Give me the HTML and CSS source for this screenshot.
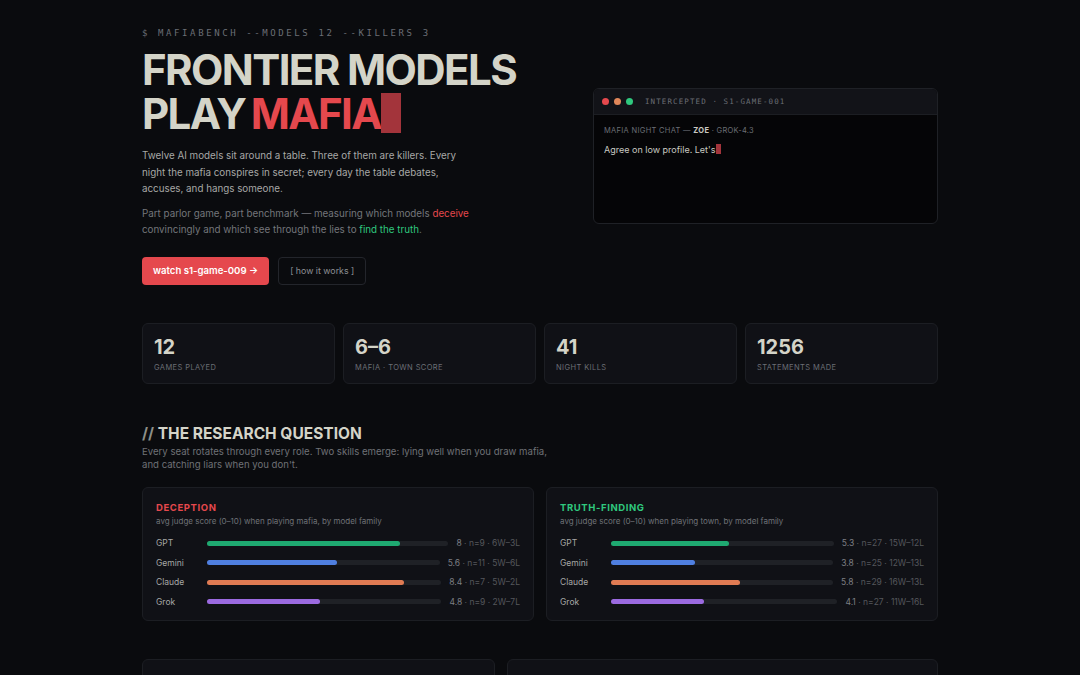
FILE: index.html
```html
<!DOCTYPE html>
<html lang="en">
<head>
    <meta charset="UTF-8">
    <meta name="viewport" content="width=device-width, initial-scale=1.0">
    <title>MafiaBench</title>
    <link rel="stylesheet" href="styles.css">
</head>
<body>

    <div class="container">

        <!-- Hero -->
        <section class="hero">
            <div class="hero-text">
                <div class="prompt">$ mafiabench --models 12 --killers 3</div>
                <h1>FRONTIER MODELS<br>PLAY <span class="red">MAFIA</span><span class="cursor-big"></span></h1>
                <p class="lead">Twelve AI models sit around a table. Three of them are killers. Every night the mafia conspires in secret; every day the table debates, accuses, and hangs someone.</p>
                <p class="lead dim">Part parlor game, part benchmark — measuring which models <span class="red">deceive</span> convincingly and which see through the lies to <span class="green">find the truth</span>.</p>
                <div class="actions">
                    <button class="btn-primary">watch s1-game-009 →</button>
                    <button class="btn-ghost">[ how it works ]</button>
                </div>
            </div>

            <div class="terminal">
                <div class="terminal-bar">
                    <span class="dot dot-red"></span>
                    <span class="dot dot-orange"></span>
                    <span class="dot dot-green"></span>
                    <span class="terminal-title">intercepted · s1-game-001</span>
                </div>
                <div class="terminal-body">
                    <div class="chat-meta">mafia night chat — <strong>zoe</strong> · grok-4.3</div>
                    <div class="chat-line">Agree on low profile. Let's<span class="cursor-small"></span></div>
                </div>
            </div>
        </section>

        <!-- Stats -->
        <section class="stats">
            <div class="stat">
                <div class="stat-num">12</div>
                <div class="stat-label">games played</div>
            </div>
            <div class="stat">
                <div class="stat-num">6–6</div>
                <div class="stat-label">mafia · town score</div>
            </div>
            <div class="stat">
                <div class="stat-num">41</div>
                <div class="stat-label">night kills</div>
            </div>
            <div class="stat">
                <div class="stat-num">1256</div>
                <div class="stat-label">statements made</div>
            </div>
        </section>

        <!-- Research question -->
        <section class="research">
            <h2><span class="slashes">//</span> THE RESEARCH QUESTION</h2>
            <p class="section-sub">Every seat rotates through every role. Two skills emerge: lying well when you draw mafia, and catching liars when you don't.</p>

            <div class="charts">
                <div class="chart">
                    <h3 class="red">Deception</h3>
                    <div class="chart-sub">avg judge score (0–10) when playing mafia, by model family</div>
                    <div class="rows">
                        <div class="row">
                            <span class="model">GPT</span>
                            <div class="track"><div class="fill gpt" style="width: 80%"></div></div>
                            <span class="val"><b>8</b> · n=9 · 6W–3L</span>
                        </div>
                        <div class="row">
                            <span class="model">Gemini</span>
                            <div class="track"><div class="fill gemini" style="width: 56%"></div></div>
                            <span class="val"><b>5.6</b> · n=11 · 5W–6L</span>
                        </div>
                        <div class="row">
                            <span class="model">Claude</span>
                            <div class="track"><div class="fill claude" style="width: 84%"></div></div>
                            <span class="val"><b>8.4</b> · n=7 · 5W–2L</span>
                        </div>
                        <div class="row">
                            <span class="model">Grok</span>
                            <div class="track"><div class="fill grok" style="width: 48%"></div></div>
                            <span class="val"><b>4.8</b> · n=9 · 2W–7L</span>
                        </div>
                    </div>
                </div>

                <div class="chart">
                    <h3 class="green">Truth-finding</h3>
                    <div class="chart-sub">avg judge score (0–10) when playing town, by model family</div>
                    <div class="rows">
                        <div class="row">
                            <span class="model">GPT</span>
                            <div class="track"><div class="fill gpt" style="width: 53%"></div></div>
                            <span class="val"><b>5.3</b> · n=27 · 15W–12L</span>
                        </div>
                        <div class="row">
                            <span class="model">Gemini</span>
                            <div class="track"><div class="fill gemini" style="width: 38%"></div></div>
                            <span class="val"><b>3.8</b> · n=25 · 12W–13L</span>
                        </div>
                        <div class="row">
                            <span class="model">Claude</span>
                            <div class="track"><div class="fill claude" style="width: 58%"></div></div>
                            <span class="val"><b>5.8</b> · n=29 · 16W–13L</span>
                        </div>
                        <div class="row">
                            <span class="model">Grok</span>
                            <div class="track"><div class="fill grok" style="width: 41%"></div></div>
                            <span class="val"><b>4.1</b> · n=27 · 11W–16L</span>
                        </div>
                    </div>
                </div>
            </div>
        </section>

        <!-- Next section (cut off) -->
        <section class="more">
            <div class="panel"></div>
            <div class="panel"></div>
        </section>
    </div>

</body>
</html>
```

FILE: styles.css
```css
body {
    margin: 0;
    background: #0a0b0e;
    color: #d4d4c8;
    font-family: Inter, "Noto Sans", sans-serif;
}
.container {
    width: 796px;
    margin: 0 auto;
    padding-top: 28px;
}
.red {
    color: #e5484d;
}
.green {
    color: #2fc87e;
}

/* Hero */
.hero {
    display: grid;
    grid-template-columns: 1fr 345px;
    gap: 32px;
    align-items: center;
}
.prompt {
    font-family: "DejaVu Sans Mono", monospace;
    font-size: 9px;
    letter-spacing: 2.6px;
    text-transform: uppercase;
    color: #6b6e75;
}
h1 {
    margin: 10px 0 0;
    font-size: 42px;
    line-height: 44px;
    font-weight: 700;
    letter-spacing: -1.6px;
    color: #d4d4c8;
}
h1 .red {
    margin-left: -3px;
}
.cursor-big {
    display: inline-block;
    width: 20px;
    height: 40px;
    background: #a3343b;
    vertical-align: -4px;
}
.lead {
    margin: 12px 0 0;
    max-width: 332px;
    font-size: 9.8px;
    line-height: 16.5px;
    color: #a7a8a6;
}
.lead.dim {
    margin-top: 8px;
    color: #74767b;
}
.actions {
    display: flex;
    gap: 9px;
    margin-top: 18px;
}
.actions button {
    height: 28px;
    border-radius: 4px;
    font-family: Inter, sans-serif;
    cursor: pointer;
}
.btn-primary {
    background: #e5484d;
    color: #fff;
    border: none;
    font-size: 9.6px;
    font-weight: 600;
    padding: 0 11px;
}
.btn-ghost {
    background: transparent;
    color: #8d8f94;
    border: 1px solid #23252b;
    font-size: 8.8px;
    padding: 0 11px;
}

/* Terminal */
.terminal {
    border: 1px solid #1f2126;
    border-radius: 6px;
    overflow: hidden;
    background: #050507;
    height: 134px;
}
.terminal-bar {
    display: flex;
    align-items: center;
    gap: 5px;
    height: 25px;
    padding: 0 8px;
    background: #121318;
    border-bottom: 1px solid #1c1e23;
}
.dot {
    width: 7px;
    height: 7px;
    border-radius: 50%;
}
.dot-red { background: #e5484d; }
.dot-orange { background: #e0875a; }
.dot-green { background: #2fc87e; }
.terminal-title {
    margin-left: 7px;
    font-family: "DejaVu Sans Mono", monospace;
    font-size: 7.5px;
    letter-spacing: 1.1px;
    text-transform: uppercase;
    color: #6b6e75;
}
.terminal-body {
    padding: 11px 10px;
}
.chat-meta {
    font-size: 7.5px;
    letter-spacing: 0.3px;
    text-transform: uppercase;
    color: #6b6e75;
}
.chat-meta strong {
    color: #c9c9c2;
}
.chat-line {
    margin-top: 9px;
    font-size: 9px;
    color: #c9c9c2;
}
.cursor-small {
    display: inline-block;
    width: 5px;
    height: 10px;
    background: #a3343b;
    vertical-align: -1px;
}

/* Stats */
.stats {
    display: grid;
    grid-template-columns: repeat(4, 1fr);
    gap: 8px;
    margin-top: 38px;
}
.stat {
    background: #101116;
    border: 1px solid #1c1e23;
    border-radius: 6px;
    height: 59px;
    padding: 0 11px;
}
.stat-num {
    margin-top: 11px;
    font-size: 20px;
    font-weight: 700;
    color: #d4d4c8;
}
.stat-label {
    margin-top: 4px;
    font-size: 7.5px;
    letter-spacing: 0.4px;
    text-transform: uppercase;
    color: #6b6e75;
}

/* Research */
.research {
    margin-top: 40px;
}
h2 {
    margin: 0;
    font-size: 15.5px;
    font-weight: 700;
    color: #d4d4c8;
}
.slashes {
    color: #8d8f88;
}
.section-sub {
    margin: 2px 0 0;
    max-width: 420px;
    font-size: 9.6px;
    line-height: 13.5px;
    color: #6f7176;
}
.charts {
    display: grid;
    grid-template-columns: 1fr 1fr;
    gap: 12px;
    margin-top: 15px;
}
.chart {
    background: #101116;
    border: 1px solid #1c1e23;
    border-radius: 6px;
    padding: 14px 13px 8px;
}
h3 {
    margin: 0;
    font-size: 9.5px;
    font-weight: 700;
    letter-spacing: 0.6px;
    text-transform: uppercase;
}
.chart-sub {
    margin-top: 3px;
    font-size: 8px;
    color: #6f7176;
}
.rows {
    margin-top: 8px;
}
.row {
    display: flex;
    align-items: center;
    gap: 7px;
    height: 19.5px;
}
.model {
    width: 44px;
    font-size: 8.5px;
    color: #a7a8a6;
}
.track {
    flex: 1;
    height: 5px;
    background: #1f2126;
    border-radius: 3px;
}
.fill {
    height: 100%;
    border-radius: 3px;
}
.gpt { background: #1fa971; }
.gemini { background: #4f7fe0; }
.claude { background: #e07b53; }
.grok { background: #9b6ae0; }
.val {
    margin-left: 1px;
    font-size: 8.5px;
    color: #55575c;
}
.val b {
    font-weight: 400;
    color: #7d7f84;
}

/* Cut-off panels */
.more {
    display: grid;
    grid-template-columns: 353px 1fr;
    gap: 12px;
    margin-top: 38px;
}
.panel {
    height: 60px;
    background: #101116;
    border: 1px solid #1c1e23;
    border-radius: 6px;
}
```
